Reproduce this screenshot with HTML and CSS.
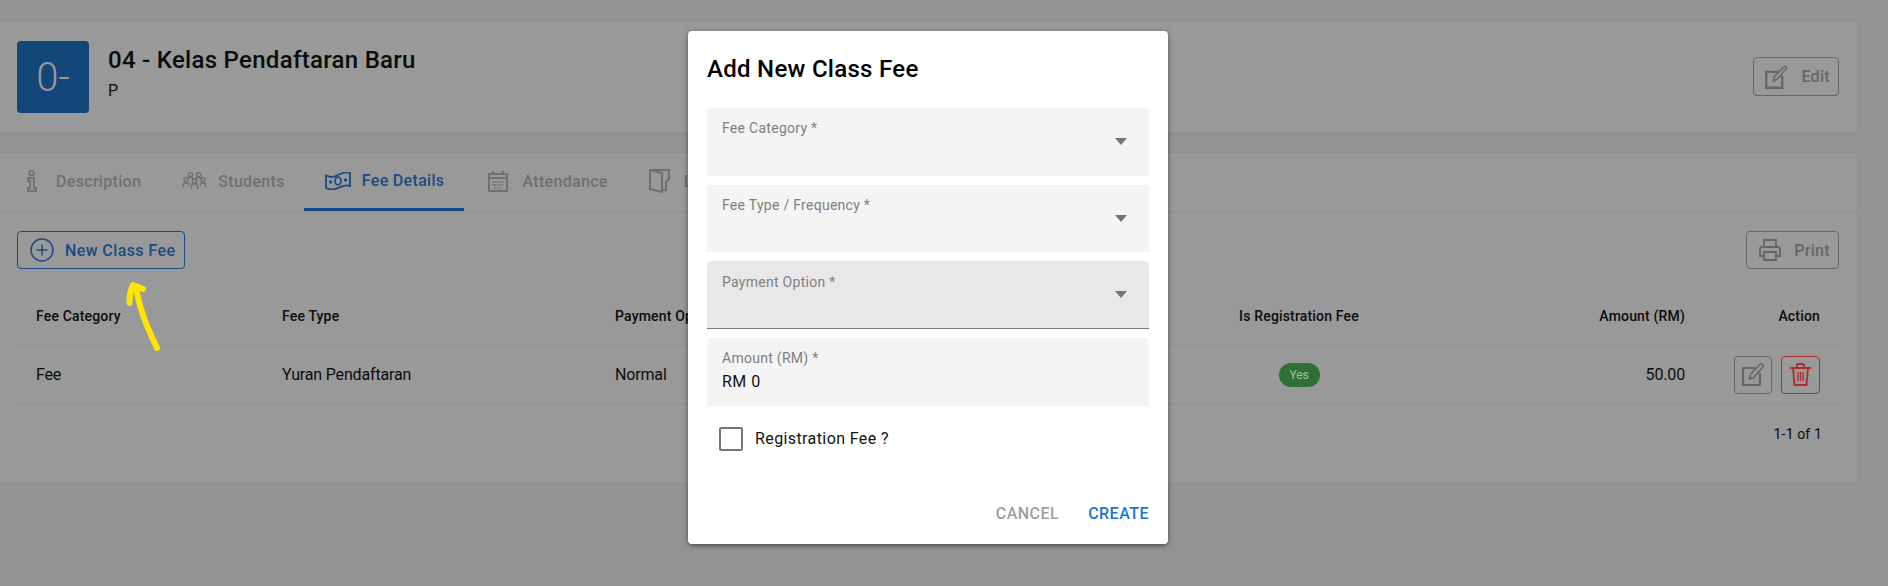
FILE: index.html
```html
<!DOCTYPE html>
<html lang="en">
<head>
<meta charset="utf-8">
<title>Add New Class Fee</title>
<link rel="stylesheet" href="styles.css">
</head>
<body>
<main class="page">
  <section class="card class-card">
    <div class="avatar">0-</div>
    <div class="class-info">
      <h1 class="class-title">04 - Kelas Pendaftaran Baru</h1>
      <p class="class-sub">P</p>
    </div>
    <button class="btn btn-muted btn-edit">
      <svg class="icon" width="24" height="24" viewBox="0 0 23 23" fill="none" stroke="currentColor"><path d="M14 6.500H1.200v15.300h15.300V10" stroke-width="2.200"/><path d="M8 15.500l1-4.500L18.500 1.500c1-.8 2.800.7 2 2L11.800 13.500z" stroke-width="1.500"/></svg>
      <span>Edit</span>
    </button>
  </section>

  <section class="card fee-card">
    <nav class="tabs">
      <a class="tab">
        <svg width="18" height="22" viewBox="0 0 18 22" fill="none" stroke="currentColor" stroke-width="1.800"><circle cx="4.500" cy="3" r="2.300"/><path d="M1 8h6v10h2v3H.8v-3H3v-7H1z"/></svg>
        <span>Description</span>
      </a>
      <a class="tab">
        <svg width="25" height="18" viewBox="0 0 25 18" fill="none" stroke="currentColor" stroke-width="1.400"><circle cx="8.500" cy="2.800" r="2.100"/><circle cx="16.500" cy="2.800" r="2.100"/><circle cx="4" cy="7.500" r="2"/><circle cx="12.500" cy="9" r="2.200"/><circle cx="21" cy="7.500" r="2"/><path d="M1 15l1-4h4l1 3M9 17l1-5h5l1 5M18 14l1-3h4l1 4M6 7l1-1.500h3l1 1.500M14 7l1-1.500h3l1 1.500"/></svg>
        <span>Students</span>
      </a>
      <a class="tab tab-active">
        <svg width="26" height="18" viewBox="0 0 26 18" fill="none" stroke="currentColor" stroke-width="1.800"><path d="M1 3.500c6 3 9 1 13-1s8-2.500 11-1.500v13c-4-2-8 0-12 2s-8 2-12 0z"/><ellipse cx="13" cy="9" rx="3" ry="3.800"/><circle cx="5.500" cy="10" r=".8"/><circle cx="20.500" cy="8" r=".8"/></svg>
        <span>Fee Details</span>
      </a>
      <a class="tab tab-wide tab-shift">
        <svg width="20" height="21" viewBox="0 0 20 21" fill="none" stroke="currentColor" stroke-width="2"><path d="M1 3h18v17H1zM1 7h18M5 0v3M15 0v3"/><path d="M4 11h12M4 14h12M6 17h8" stroke-width="1.500" stroke-dasharray="1.500 1"/></svg>
        <span>Attendance</span>
      </a>
      <a class="tab tab-wide">
        <svg width="21" height="24" viewBox="0 0 21 24" fill="none" stroke="currentColor" stroke-width="2"><path d="M1 1h19v9l-3 3v8H13M1 1v19l12 3V4L1 1z"/></svg>
        <span>D</span>
      </a>
    </nav>

    <div class="toolbar">
      <button class="btn btn-primary">
        <svg width="24" height="24" viewBox="0 0 24 24" fill="none" stroke="currentColor" stroke-width="1.500"><circle cx="12" cy="12" r="11"/><path d="M12 6.500v11M6.500 12h11"/></svg>
        <span>New Class Fee</span>
      </button>
      <button class="btn btn-muted">
        <svg width="22" height="22" viewBox="0 0 22 22" fill="none" stroke="currentColor" stroke-width="1.800"><path d="M5 8V1h12v7M5 17H1V10q0-2 2-2h16q2 0 2 2v7h-4"/><path d="M5 13h12v8H5z"/></svg>
        <span>Print</span>
      </button>
    </div>

    <table class="fee-table">
      <colgroup>
        <col class="col-category"><col class="col-type"><col class="col-option"><col class="col-reg"><col class="col-amount"><col class="col-action">
      </colgroup>
      <thead>
        <tr>
          <th>Fee Category</th>
          <th>Fee Type</th>
          <th>Payment Option</th>
          <th class="center">Is Registration Fee</th>
          <th class="right">Amount (RM)</th>
          <th class="right">Action</th>
        </tr>
      </thead>
      <tbody>
        <tr>
          <td>Fee</td>
          <td>Yuran Pendaftaran</td>
          <td>Normal</td>
          <td class="center"><span class="chip">Yes</span></td>
          <td class="right">50.00</td>
          <td class="right">
            <div class="actions">
              <button class="icon-btn icon-btn-edit">
                <svg width="25" height="25" viewBox="0 0 25 25" fill="none" stroke="currentColor"><path d="M14 6H2v17h17V11" stroke-width="2.200"/><path d="M8.500 17l1.200-5L19.500 2c1-1 3.600 1.200 2.700 2.500L12.800 15.500z" stroke-width="1.500"/></svg>
              </button>
              <button class="icon-btn icon-btn-delete">
                <svg width="21" height="23" viewBox="0 0 21 23" fill="none" stroke="currentColor" stroke-width="1.800"><path d="M0 5h21M7 5V2q0-1 1-1h5q1 0 1 1v3M3 5l1.500 17h12L18 5"/><path d="M8 9v9M10.500 9v9M13 9v9" stroke-width="1.300"/></svg>
              </button>
            </div>
          </td>
        </tr>
      </tbody>
    </table>
    <div class="pagination">1-1 of 1</div>
  </section>

  <svg class="annotation" width="44" height="80" viewBox="0 0 44 80" fill="none" stroke="#ffe600" stroke-width="6" stroke-linecap="round" stroke-linejoin="round"><path d="M37 71C30 56 20 36 16 10M9.500 26C9.500 18 10 13 13 8L23 12"/></svg>
</main>

<aside class="dialog">
  <h2 class="dialog-title">Add New Class Fee</h2>
  <div class="fields">
    <div class="field">
      <div class="field-text"><label class="field-label">Fee Category *</label></div>
      <span class="caret"></span>
    </div>
    <div class="field">
      <div class="field-text"><label class="field-label">Fee Type / Frequency *</label></div>
      <span class="caret"></span>
    </div>
    <div class="field field-focus">
      <div class="field-text"><label class="field-label">Payment Option *</label></div>
      <span class="caret"></span>
    </div>
    <div class="field">
      <div class="field-text"><label class="field-label">Amount (RM) *</label><div class="field-value">RM 0</div></div>
    </div>
  </div>
  <div class="check-row">
    <span class="checkbox"></span>
    <span class="check-label">Registration Fee ?</span>
  </div>
  <div class="dialog-actions">
    <button class="text-btn text-btn-cancel">CANCEL</button>
    <button class="text-btn text-btn-create">CREATE</button>
  </div>
</aside>
</body>
</html>
```

FILE: styles.css
```css
* { box-sizing: border-box; }

html, body { height: 100%; }

body {
  margin: 0;
  background: #929395;
  color: #0c0c0c;
  font-family: Roboto, "Liberation Sans", sans-serif;
  overflow: hidden;
}

.page {
  position: relative;
  padding: 20px 30px 0 0;
}

.card {
  background: #999999;
  border: 1px solid #8f9092;
  border-left: 0;
  border-radius: 0 4px 4px 0;
}

.class-card {
  display: flex;
  align-items: flex-start;
  height: 113px;
  padding: 20px 18px 0 17px;
}

.avatar {
  display: flex;
  align-items: center;
  justify-content: center;
  width: 72px;
  height: 72px;
  border-radius: 4px;
  background: #134679;
  color: #999999;
  font-size: 40px;
  font-weight: 300;
}

.class-info { margin: 4px 0 0 19px; }

.class-title {
  margin: 0;
  font-size: 24px;
  font-weight: 500;
  line-height: 30px;
  letter-spacing: .012em;
}

.class-sub {
  margin: 6px 0 0;
  font-size: 16px;
  line-height: 20px;
}

.btn {
  display: flex;
  align-items: center;
  gap: 13px;
  height: 38px;
  padding: 0 8px 0 12px;
  border: 1px solid currentColor;
  border-radius: 4px;
  background: transparent;
  font-family: inherit;
  font-size: 16px;
  font-weight: 500;
}

.btn-muted { color: #666666; letter-spacing: .02em; }
.btn-primary { gap: 11px; padding-right: 9px; color: #1a4a85; letter-spacing: .025em; }
.btn-edit { gap: 12px; height: 39px; margin: 16px 0 0 auto; padding-left: 11px; }

.fee-card {
  height: 332px;
  margin-top: 19px;
}

.tabs {
  display: flex;
  height: 59px;
  padding-left: 6px;
  border-bottom: 1px solid #8f9092;
}

.tab {
  display: flex;
  align-items: center;
  gap: 11px;
  height: 58px;
  padding: 0 20px 2px 21px;
  color: #707070;
  font-size: 16px;
  font-weight: 500;
  letter-spacing: .02em;
}

.tab-active {
  margin-left: -1px;
  color: #1a4a85;
  border-bottom: 3px solid #134a8a;
  padding-bottom: 0;
}

.tab-wide { gap: 14px; }
.tab-shift { margin-left: 3px; }

.toolbar {
  display: flex;
  justify-content: space-between;
  padding: 19px 18px 0 17px;
}

.fee-table {
  width: 1821px;
  margin: 18px 0 0 17px;
  border-collapse: collapse;
  table-layout: fixed;
  font-size: 16px;
  letter-spacing: -.01em;
}

.col-category { width: 247px; }
.col-type { width: 333px; }
.col-option { width: 603px; }
.col-reg { width: 198px; }
.col-amount { width: 305px; }
.col-action { width: 135px; }

.fee-table th,
.fee-table td {
  padding: 0 18px;
  text-align: left;
  border-bottom: 1px solid #8f9092;
}

.fee-table th:first-child,
.fee-table td:first-child { padding-left: 19px; }

.fee-table th {
  height: 58px;
  font-size: 14px;
  font-weight: 500;
  letter-spacing: .012em;
}

.fee-table td { height: 59px; }

.fee-table .center { text-align: center; }
.fee-table .right { text-align: right; }

.chip {
  display: inline-block;
  width: 41px;
  height: 24px;
  border-radius: 12px;
  background: #2f7034;
  color: #9fc4a2;
  font-size: 12px;
  line-height: 24px;
  text-align: center;
  vertical-align: middle;
}

.actions {
  display: flex;
  justify-content: flex-end;
  gap: 9px;
}

.icon-btn {
  display: flex;
  align-items: center;
  justify-content: center;
  width: 38px;
  height: 38px;
  padding: 0;
  border: 1px solid currentColor;
  border-radius: 4px;
  background: transparent;
}

.icon-btn-edit { color: #666666; }
.icon-btn-delete { width: 39px; color: #ad2c2c; }

.pagination {
  width: 1822px;
  padding-top: 19px;
  font-size: 14px;
  line-height: 20px;
  letter-spacing: .01em;
  text-align: right;
}

.annotation {
  position: absolute;
  left: 120px;
  top: 277px;
}

.dialog {
  position: absolute;
  left: 688px;
  top: 31px;
  display: flex;
  flex-direction: column;
  width: 480px;
  height: 513px;
  padding: 0 19px;
  border-radius: 4px;
  background: #ffffff;
  box-shadow: 0 2px 4px -1px rgba(0,0,0,.4), 0 1px 6px rgba(0,0,0,.25);
}

.dialog-title {
  height: 77px;
  margin: 0;
  color: #000000;
  font-size: 24px;
  font-weight: 500;
  line-height: 76px;
  letter-spacing: .012em;
}

.fields {
  display: flex;
  flex-direction: column;
  gap: 9px;
}

.field {
  display: flex;
  align-items: flex-start;
  justify-content: space-between;
  height: 67.67px;
  padding: 12px 22.5px 0 15px;
  border-radius: 4px 4px 0 0;
  background: #f4f4f4;
}

.field-focus {
  padding-top: 13px;
  background: #e8e8e8;
  border-bottom: 1px solid #7a7a7a;
}

.field-focus .caret { margin-top: 17px; }

.field-label {
  display: block;
  color: #808080;
  font-size: 14px;
  line-height: 16px;
  letter-spacing: .02em;
}

.field-value {
  margin-top: 6px;
  color: #111111;
  font-size: 16px;
  line-height: 20px;
  letter-spacing: .03em;
}

.caret {
  width: 0;
  height: 0;
  margin-top: 18px;
  border-left: 6px solid transparent;
  border-right: 6px solid transparent;
  border-top: 7px solid #757575;
}

.check-row {
  display: flex;
  align-items: center;
  gap: 12px;
  margin: 21px 0 0 12px;
}

.checkbox {
  width: 24px;
  height: 24px;
  border: 2px solid #757575;
  border-radius: 2px;
}

.check-label {
  color: #111111;
  font-size: 16px;
  line-height: 24px;
  letter-spacing: .025em;
}

.dialog-actions {
  display: flex;
  justify-content: flex-end;
  gap: 29px;
  margin-top: auto;
  padding-bottom: 20px;
}

.text-btn {
  padding: 0;
  border: 0;
  background: transparent;
  font-family: inherit;
  font-size: 16px;
  font-weight: 500;
  line-height: 20px;
  letter-spacing: .03em;
}

.text-btn-cancel { color: #9e9e9e; }
.text-btn-create { color: #1976d2; }
```
